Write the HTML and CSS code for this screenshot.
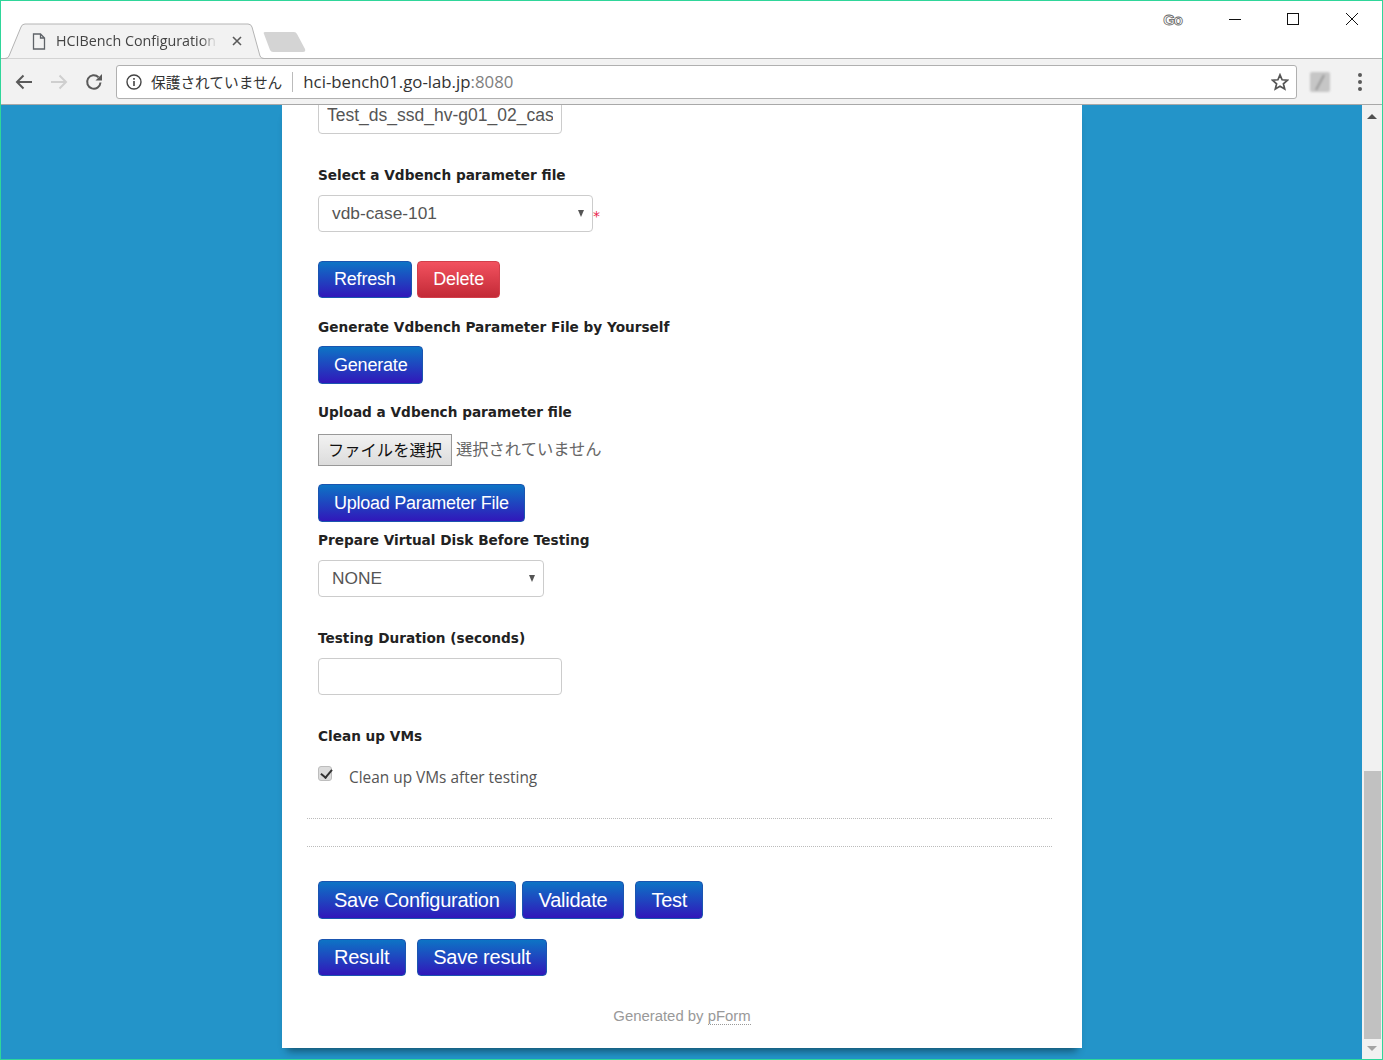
FILE: index.html
```html
<!DOCTYPE html>
<html lang="ja">
<head>
<meta charset="utf-8">
<title>HCIBench Configuration</title>
<link rel="stylesheet" href="styles.css">
</head>
<body>
<div class="window">
  <header class="chrome">
    <div class="tabstrip">
      <div class="tab">
        <svg class="tab-shape" width="262" height="36" viewBox="0 0 262 36"><path d="M0 35.500H3Q6 35.500 7 33L19 4Q20 1 23 1H246Q249 1 250 4L258 33Q259 35.500 262 35.500" fill="#f2f2f2" stroke="#b4b4b4"/></svg>
        <svg class="tab-icon" width="14" height="17" viewBox="0 0 14 17"><path d="M1.500 1H8.500L12.500 5V16H1.500ZM8.500 1V5H12.500" fill="none" stroke="#5f6368" stroke-width="1.300"/></svg>
        <span class="tab-title">HCIBench Configuration</span>
        <svg class="tab-close" width="10" height="10" viewBox="0 0 10 10"><path d="M1 1L9 9M9 1L1 9" stroke="#5a5a5a" stroke-width="1.600"/></svg>
      </div>
      <svg class="newtab" width="44" height="22" viewBox="0 0 44 22"><path d="M2 1H31Q33 1 34 3L42 18Q43 21 40 21H10Q8 21 7 19L1 3Q0 1 2 1Z" fill="#d4d4d4"/></svg>
      <div class="winctl">
        <span class="go">Go</span>
        <svg class="wc" width="12" height="12" viewBox="0 0 12 12"><path d="M0 6.500H12" stroke="#111"/></svg>
        <svg class="wc" width="12" height="12" viewBox="0 0 12 12"><rect x=".5" y=".5" width="11" height="11" fill="none" stroke="#111"/></svg>
        <svg class="wc" width="12" height="12" viewBox="0 0 12 12"><path d="M0 0L12 12M12 0L0 12" stroke="#111"/></svg>
      </div>
    </div>
    <div class="toolbar">
      <svg class="nav" width="18" height="16" viewBox="0 0 18 16"><path d="M17 8H2M8.500 1.500L2 8L8.500 14.500" fill="none" stroke="#5a5a5a" stroke-width="2"/></svg>
      <svg class="nav" width="18" height="16" viewBox="0 0 18 16"><path d="M1 8H16M9.500 1.500L16 8L9.500 14.500" fill="none" stroke="#cfcfcf" stroke-width="2"/></svg>
      <svg class="nav" width="18" height="18" viewBox="0 0 18 18"><path d="M15.500 9.500A6.700 6.700 0 1 1 13.500 4.200" fill="none" stroke="#5a5a5a" stroke-width="2"/><path d="M17 1V7.500H10.500Z" fill="#5a5a5a"/></svg>
      <div class="omnibox">
        <svg class="info" width="16" height="16" viewBox="0 0 16 16"><circle cx="8" cy="8" r="7" fill="none" stroke="#444" stroke-width="1.400"/><path d="M8 7V12M8 4V5.800" stroke="#444" stroke-width="1.600"/></svg>
        <span class="secure">保護されていません</span>
        <span class="sep"></span>
        <span class="url">hci-bench01.go-lab.jp<span class="port">:8080</span></span>
        <svg class="star" width="18" height="18" viewBox="0 0 18 18"><path d="M9 1.800L11.100 6.800L16.500 7.200L12.400 10.800L13.700 16L9 13.200L4.300 16L5.600 10.800L1.500 7.200L6.900 6.800Z" fill="none" stroke="#555" stroke-width="1.700"/></svg>
      </div>
      <svg class="ext" width="20" height="20" viewBox="0 0 20 20"><rect width="20" height="20" rx="2" fill="#c6c6c6"/><path d="M6 18L14 3" stroke="#9a9a9a" stroke-width="2"/></svg>
      <div class="menu"><i></i><i></i><i></i></div>
    </div>
  </header>
  <div class="viewport">
    <main class="page">
      <form class="panel">
        <input class="text first" type="text" value="Test_ds_ssd_hv-g01_02_cas">
        <label class="lab lab-select">Select a Vdbench parameter file</label>
        <div class="selrow">
          <div class="sel sel-wide"><span>vdb-case-101</span></div><em class="req">*</em>
        </div>
        <div class="btnrow r1">
          <button class="btn" type="button">Refresh</button>
          <button class="btn danger" type="button">Delete</button>
        </div>
        <label class="lab lab-gen">Generate Vdbench Parameter File by Yourself</label>
        <button class="btn tall" type="button">Generate</button>
        <label class="lab lab-up">Upload a Vdbench parameter file</label>
        <div class="filerow">
          <button class="filebtn" type="button">ファイルを選択</button>
          <span class="nofile">選択されていません</span>
        </div>
        <button class="btn tall upload" type="button">Upload Parameter File</button>
        <label class="lab lab-prep">Prepare Virtual Disk Before Testing</label>
        <div class="sel sel-mid"><span>NONE</span></div>
        <label class="lab lab-dur">Testing Duration (seconds)</label>
        <input class="text" type="text">
        <label class="lab lab-clean">Clean up VMs</label>
        <div class="checkrow">
          <input class="check" type="checkbox" checked>
          <span class="checktext">Clean up VMs after testing</span>
        </div>
        <hr class="rule rule1">
        <hr class="rule rule2">
        <div class="btnrow r2">
          <button class="btn big tall" type="button">Save Configuration</button>
          <button class="btn big tall pad16 gap6" type="button">Validate</button>
          <button class="btn big tall" type="button">Test</button>
        </div>
        <div class="btnrow r3">
          <button class="btn big pad155" type="button">Result</button>
          <button class="btn big" type="button">Save result</button>
        </div>
        <p class="foot">Generated by <a class="flink">pForm</a></p>
      </form>
    </main>
    <aside class="scrollbar">
      <span class="arrow up"></span>
      <span class="thumb"></span>
      <span class="arrow down"></span>
    </aside>
  </div>
</div>
</body>
</html>
```
FILE: styles.css
```css
* { box-sizing: border-box; }
html, body { margin: 0; height: 100%; overflow: hidden; background: #fff; }
.window {
  height: 1060px;
  border: 1px solid #2fd69a;
  display: flex;
  flex-direction: column;
  font-family: "Liberation Sans", Arial, sans-serif;
}
.chrome { flex: none; height: 104px; display: flex; flex-direction: column; background: #fff; }
.tabstrip { height: 58px; flex: none; display: flex; align-items: flex-end; border-bottom: 1px solid #b4b4b4; position: relative; }
.tab {
  position: relative;
  width: 262px;
  margin-left: 1px;
  height: 36px;
  margin-bottom: -1px;
  display: flex;
  align-items: center;
  padding: 0 0 0 30px;
  flex: none;
}
.tab-shape { position: absolute; left: 0; top: 0; }
.tab-icon, .tab-title, .tab-close { position: relative; }
.tab-icon { flex: none; }
.tab-title {
  margin: 0 0 2px 10px;
  width: 161px;
  white-space: nowrap;
  overflow: hidden;
  font: 14.300px "Open Sans", "Noto Sans", sans-serif;
  color: #444;
  -webkit-mask-image: linear-gradient(90deg, #000 90%, transparent);
  mask-image: linear-gradient(90deg, #000 90%, transparent);
}
.tab-close { margin-left: 15px; flex: none; }
.newtab { flex: none; margin: 0 0 5px -1px; }
.winctl { margin-left: auto; height: 56px; display: flex; align-items: flex-start; padding-top: 12px; align-self: flex-start; }
.go {
  font: bold 15px "Liberation Sans", sans-serif;
  letter-spacing: -1px;
  color: #fff;
  -webkit-text-stroke: .8px #666;
  margin: 0 47px 0 0;
  line-height: 14px;
}
.wc { display: block; margin-right: 46px; flex: none; }
.wc:nth-child(3) { margin-right: 47px; }
.wc:last-child { margin-right: 24px; }
.toolbar {
  height: 46px;
  flex: none;
  background: #f2f2f2;
  border-bottom: 1px solid #a8a8a8;
  display: flex;
  align-items: center;
  padding-left: 14px;
}
.nav { flex: none; margin-right: 17px; }
.omnibox {
  flex: none;
  width: 1181px;
  height: 34px;
  margin-left: -4px;
  background: #fff;
  border: 1px solid #b0b0b0;
  border-radius: 3px;
  display: flex;
  align-items: center;
  padding-left: 9px;
}
.info { flex: none; }
.secure { margin-left: 9px; font: 14.700px "Noto Sans CJK JP", sans-serif; color: #333; white-space: nowrap; }
.sep { width: 1px; height: 20px; background: #bbb; margin: 0 10px; flex: none; }
.url { font: 16.800px "Open Sans", sans-serif; color: #333; white-space: nowrap; }
.port { color: #808080; }
.star { margin-left: auto; margin-right: 7px; flex: none; }
.ext { flex: none; margin-left: 13px; filter: blur(1px); }
.menu { margin-left: 28px; display: flex; flex-direction: column; gap: 3px; }
.menu i { width: 4px; height: 4px; border-radius: 50%; background: #5a5a5a; display: block; }
.viewport { flex: 1; display: flex; min-height: 0; }
.page { flex: 1; background: #2394c9; overflow: hidden; padding-left: 281px; height: 954px; }
.panel {
  width: 800px;
  height: 943px;
  background: #fff;
  padding: 0 30px 0 36px;
  display: flex;
  flex-direction: column;
  align-items: flex-start;
  box-shadow: 0 8px 8px -5px rgba(0, 0, 0, .45);
}
.text {
  display: block;
  width: 244px;
  height: 37px;
  flex: none;
  border: 1px solid #ccc;
  border-radius: 4px;
  padding: 0 8px;
  font: 17.500px "Liberation Sans", sans-serif;
  color: #555;
  background: #fff;
  outline: none;
}
.text.first { margin-top: -8px; }
.lab {
  display: block;
  font: bold 13.650px/20px "DejaVu Sans", sans-serif;
  color: #222;
  white-space: nowrap;
  flex: none;
}
.lab-select { margin-top: 31px; }
.selrow { display: flex; margin-top: 10px; }
.sel {
  position: relative;
  height: 37px;
  border: 1px solid #ccc;
  border-radius: 4px;
  padding-left: 13px;
  font: 17.330px/35px "Liberation Sans", sans-serif;
  color: #555;
  flex: none;
}
.sel::after {
  content: "";
  position: absolute;
  right: 8px;
  top: 14px;
  border-left: 3.500px solid transparent;
  border-right: 3.500px solid transparent;
  border-top: 7px solid #555;
}
.sel-wide { width: 275px; }
.sel-mid { width: 226px; margin-top: 10px; }
.req { font: 14px/42px "DejaVu Sans", sans-serif; color: #e8224a; width: 8px; }
.btnrow { display: flex; flex: none; }
.r1 { margin-top: 24px; gap: 5px; }
.btn {
  height: 37px;
  flex: none;
  padding: 0 15px;
  border: 1px solid #1a55b0;
  border-radius: 4px;
  background: linear-gradient(#0d74c5, #3117ba);
  color: #fff;
  font: 18px "Liberation Sans", sans-serif;
  letter-spacing: -.2px;
  white-space: nowrap;
}
.btn.tall { height: 38px; }
.danger { border-color: #d23f4b; background: linear-gradient(#f2525f, #c32a37); padding: 0 15.500px; }
.lab-gen { margin-top: 19px; }
.lab-gen + .btn { margin-top: 9px; }
.lab-up { margin-top: 18px; }
.filerow { display: flex; align-items: center; margin-top: 12px; flex: none; }
.filebtn {
  width: 134px;
  height: 32px;
  padding: 0 0 3px;
  border: 1px solid #999;
  background: linear-gradient(#f2f2f2, #dcdcdc);
  font: 16.300px "Noto Sans CJK JP", sans-serif;
  color: #111;
}
.nofile { margin: 0 0 4px 4px; font: 16.300px "Noto Sans CJK JP", sans-serif; color: #666; }
.upload { margin-top: 18px; letter-spacing: -.25px; }
.lab-prep { margin-top: 8px; }
.lab-dur { margin-top: 31px; }
.lab-dur + .text { margin-top: 10px; }
.lab-clean { margin-top: 31px; }
.checkrow { display: flex; align-items: flex-start; margin-top: 20px; font: 15.400px/22px "Open Sans", sans-serif; color: #555; flex: none; }
.check {
  appearance: none;
  -webkit-appearance: none;
  position: relative;
  width: 14px;
  height: 15px;
  margin: 0 17px 0 0;
  flex: none;
  background: #dcdcdc;
  border: 1px solid #bdbdbd;
  border-radius: 3px;
}
.check::after {
  content: "";
  position: absolute;
  left: 4px;
  top: 0;
  width: 5px;
  height: 9px;
  border: solid #333;
  border-width: 0 2.500px 2.500px 0;
  transform: rotate(40deg);
}
.checktext { margin-top: 1px; height: 23px; }
.rule { border: 0; border-top: 1px dotted #bbb; width: 745px; margin: 0 0 0 -11px; flex: none; }
.rule1 { margin-top: 28px; }
.rule2 { margin-top: 27px; }
.big { font-size: 20px; letter-spacing: -.25px; }
.pad16 { padding: 0 16px; }
.pad155 { padding: 0 16px 0 15px; }
.r2 { margin-top: 34px; gap: 6px; }
.gap6 { margin-right: 5px; }
.r3 { margin-top: 20px; gap: 11px; }
.foot {
  margin: 30px 0 0;
  width: 728px;
  text-align: center;
  font: 14.900px/20px "Liberation Sans", sans-serif;
  color: #999;
  flex: none;
}
.flink { border-bottom: 1px dotted #999; }
.scrollbar { flex: none; width: 20px; background: #f1f1f1; display: flex; flex-direction: column; align-items: center; padding-top: 9px; height: 954px; }
.arrow { display: block; width: 0; height: 0; border-left: 5px solid transparent; border-right: 5px solid transparent; flex: none; }
.up { border-bottom: 5px solid #505050; }
.thumb { display: block; width: 17px; height: 268px; margin: 652px 0 0 1px; background: #c1c1c1; flex: none; }
.down { border-top: 5px solid #a3a3a3; margin-top: 7px; }
```
